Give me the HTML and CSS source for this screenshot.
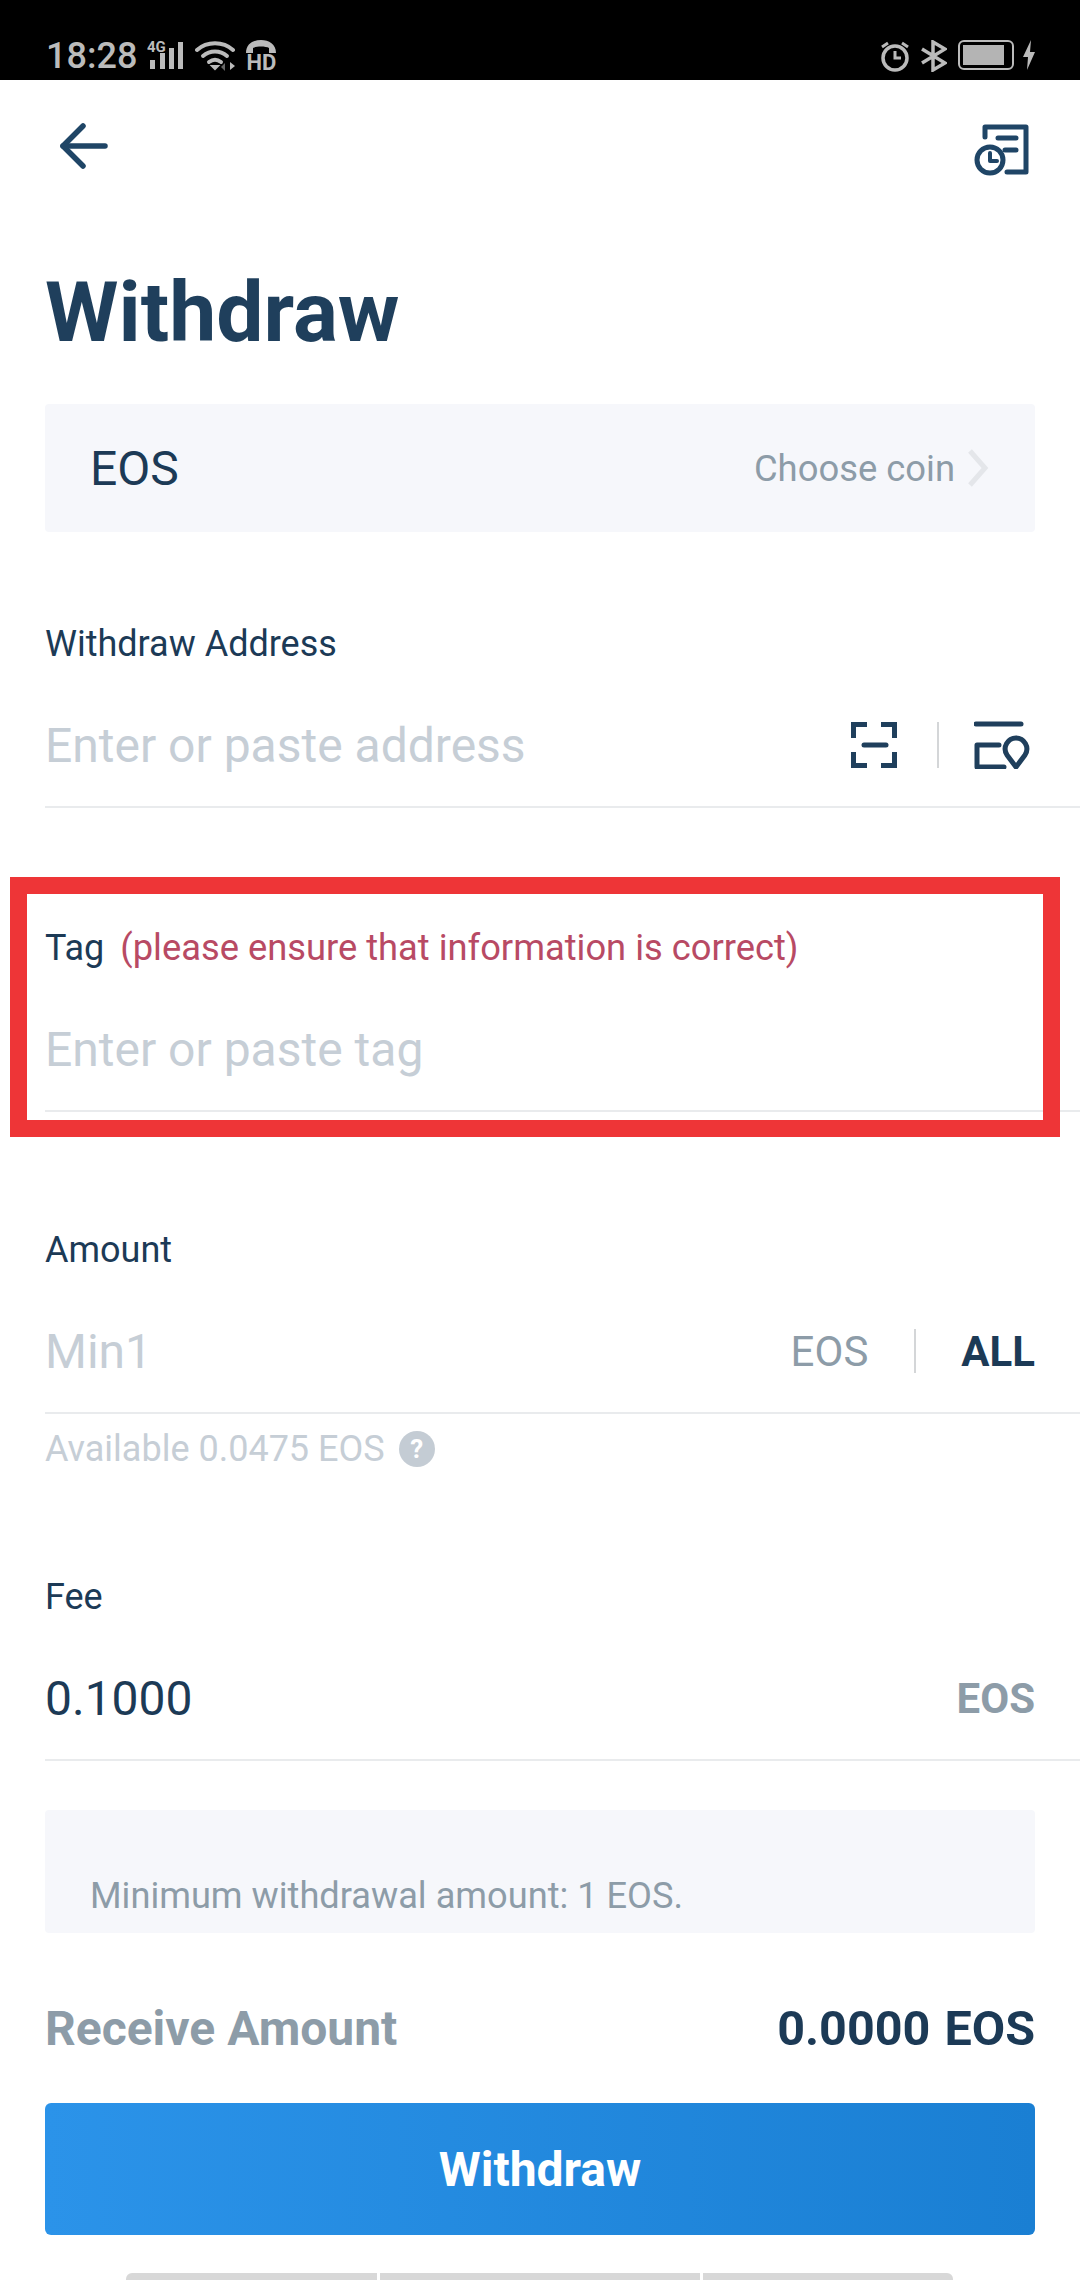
FILE: index.html
```html
<!DOCTYPE html>
<html lang="en">
<head>
<meta charset="UTF-8">
<meta name="viewport" content="width=device-width, initial-scale=1.0">
<title>Withdraw</title>
<link rel="stylesheet" href="styles.css">
</head>
<body>
<div class="phone">

    <!-- status bar -->
    <div class="status-bar">
        <div class="status-left">
            <span class="time">18:28</span>
            <svg class="icon-signal" width="38" height="36" viewBox="0 -6 38 36">
                <text x="0" y="12" class="net-type">4G</text>
                <rect x="3" y="20" width="5" height="9" fill="#bbb"/>
                <rect x="13" y="13" width="5" height="16" fill="#bbb"/>
                <rect x="22" y="8" width="5" height="21" fill="#bbb"/>
                <rect x="31" y="2" width="5" height="27" fill="#bbb"/>
            </svg>
            <svg class="icon-wifi" width="42" height="32" viewBox="0 0 42 32" fill="none" stroke="#bbb" stroke-width="4" stroke-linecap="round">
                <path d="M2 10C12 1 28 1 38 10"/>
                <path d="M8 16C15 10 25 10 32 16"/>
                <path d="M14 22C18 19 22 19 26 22"/>
                <path d="M17 26L20 29L23 26Z" fill="#bbb" stroke-width="2"/>
                <path d="M35 22V30L40 26Z" fill="#bbb" stroke="none"/>
                <path d="M30 23V31L26 27Z" fill="#666" stroke="none"/>
            </svg>
            <span class="hd-icon">
                <svg width="30" height="14" viewBox="0 0 30 14" fill="#bbb">
                    <path d="M0 13C0 4 7 0 15 0S30 4 30 13H23V8C20 6 10 6 7 8V13Z"/>
                </svg>
                <span class="hd-text">HD</span>
            </span>
        </div>
        <div class="status-right">
            <svg width="30" height="32" viewBox="0 0 30 32" fill="none" stroke="#bbb" stroke-width="3.5">
                <circle cx="15" cy="18" r="12"/>
                <path d="M15 11V18H21" stroke-width="3"/>
                <path d="M2 7L8 3M28 7L22 3" stroke-width="3"/>
            </svg>
            <svg width="26" height="32" viewBox="0 0 26 32" fill="none" stroke="#bbb" stroke-width="3.5">
                <path d="M1 9L24 23L12 30V2L24 9L1 23"/>
            </svg>
            <span class="battery"><span class="battery-fill"></span></span>
            <svg class="bolt" width="14" height="30" viewBox="0 0 14 30" fill="#bbb">
                <path d="M9 0L1 17H6L5 30L13 12H8Z"/>
            </svg>
        </div>
    </div>

    <div class="screen">
        <div class="top-bar">
            <svg width="48" height="46" viewBox="0 0 48 46" fill="none" stroke="#1f4566" stroke-width="5.5" stroke-linecap="round" stroke-linejoin="round">
                <path d="M23 3L3 23L23 43"/>
                <path d="M3 23H45"/>
            </svg>
            <svg width="56" height="54" viewBox="0 0 56 54" fill="none" stroke="#1f4566" stroke-width="5" stroke-linecap="round" stroke-linejoin="round">
                <path d="M11 14V4H52V49H33"/>
                <path d="M24 15H42M31 27H42"/>
                <circle cx="16" cy="37" r="13"/>
                <path d="M16 30V38H23" stroke-width="4"/>
            </svg>
        </div>

        <h1 class="title">Withdraw</h1>

        <div class="coin-box">
            <span class="coin-name">EOS</span>
            <span class="coin-choose">Choose coin
                <svg width="22" height="38" viewBox="0 0 22 38" fill="none" stroke="#e4e6ea" stroke-width="5">
                    <path d="M3 2L18 19L3 36"/>
                </svg>
            </span>
        </div>

        <div class="field field-address">
            <div class="field-label">Withdraw Address</div>
            <div class="field-row">
                <span class="placeholder">Enter or paste address</span>
                <div class="field-tools">
                    <svg width="46" height="46" viewBox="0 0 46 46" fill="none" stroke="#1f3f5c" stroke-width="5">
                        <path d="M16 2.500H2.500V16M30 2.500H43.500V16M16 43.500H2.500V30M30 43.500H43.500V30"/>
                        <path d="M13 23H35" stroke-linecap="round"/>
                    </svg>
                    <span class="tool-divider"></span>
                    <svg width="56" height="48" viewBox="0 0 56 48" fill="none" stroke="#1f3f5c" stroke-width="5" stroke-linecap="round" stroke-linejoin="round">
                        <path d="M2 3H47"/>
                        <path d="M25 24H3V46H30"/>
                        <path d="M43 46L34 34C29 26 35 17 43 17S57 26 52 34Z" transform="translate(-1 0)"/>
                    </svg>
                </div>
            </div>
        </div>

        <div class="field field-tag">
            <div class="field-label">Tag<span class="field-warning">(please ensure that information is correct)</span></div>
            <div class="field-row">
                <span class="placeholder">Enter or paste tag</span>
            </div>
            <!-- red mark over the screenshot -->
            <div class="highlight"></div>
        </div>

        <div class="field field-amount">
            <div class="field-label">Amount</div>
            <div class="field-row">
                <span class="placeholder">Min1</span>
                <div class="amount-tools">
                    <span class="amount-unit">EOS</span>
                    <span class="amount-divider"></span>
                    <span class="amount-all">ALL</span>
                </div>
            </div>
        </div>
        <div class="available">Available 0.0475 EOS <span class="help">?</span></div>

        <div class="field field-fee">
            <div class="field-label">Fee</div>
            <div class="field-row">
                <span class="fee-value">0.1000</span>
                <span class="fee-unit">EOS</span>
            </div>
        </div>

        <div class="info-box">Minimum withdrawal amount: 1 EOS.</div>

        <div class="receive-row">
            <span class="receive-label">Receive Amount</span>
            <span class="receive-value">0.0000 EOS</span>
        </div>

        <button class="submit">Withdraw</button>

        <div class="peek-bars">
            <span class="peek peek-a"></span>
            <span class="peek peek-b"></span>
            <span class="peek peek-c"></span>
        </div>
    </div>
</div>
</body>
</html>
```

FILE: styles.css
```css
* {
box-sizing: border-box;
}
body {
margin: 0;
padding: 0;
background-color: white;
font-family: Roboto, "Liberation Sans", sans-serif;
color: #1c3a56;
}
.phone {
width: 1080px;
height: 2280px;
overflow: hidden;
}
.status-bar {
height: 80px;
background-color: black;
display: flex;
justify-content: space-between;
align-items: flex-start;
padding: 40px 44px 0 46px;
color: #bbb;
}
.status-left {
display: flex;
align-items: flex-start;
}
.time {
font-size: 36px;
font-weight: 500;
line-height: 32px;
margin-right: 10px;
}
.icon-signal {
margin-top: -6px;
margin-right: 10px;
}
.net-type {
font-size: 15px;
font-weight: 700;
fill: #bbb;
}
.icon-wifi {
margin-right: 9px;
}
.hd-icon {
display: flex;
flex-direction: column;
align-items: center;
}
.hd-text {
font-size: 22px;
font-weight: 700;
line-height: 18px;
}
.status-right {
display: flex;
align-items: flex-start;
gap: 11px;
}
.battery {
width: 56px;
height: 30px;
border: 2px solid #bbb;
border-radius: 6px;
padding: 3px;
margin-right: -3px;
}
.battery-fill {
display: block;
width: 41px;
height: 20px;
background-color: #b4b4b4;
}
.screen {
padding-left: 45px;
}
.top-bar {
height: 132px;
display: flex;
justify-content: space-between;
align-items: flex-start;
padding: 43px 50px 0 15px;
}
.title {
margin: 59px 0 49px 0;
font-size: 84px;
line-height: 84px;
font-weight: 700;
color: #1f3f5c;
}
.coin-box {
width: 990px;
height: 128px;
border-radius: 4px;
background-color: #f6f7fb;
display: flex;
justify-content: space-between;
align-items: center;
padding: 0 45px;
}
.coin-name {
font-size: 48px;
}
.coin-choose {
display: flex;
align-items: center;
gap: 12px;
font-size: 36.400px;
color: #8d9ca8;
margin-right: 1px;
}
.field {
border-bottom: 2px solid #e9ebed;
height: 185px;
}
.field-address {
margin-top: 91px;
}
.field-tag {
position: relative;
margin-top: 119px;
}
.field-amount {
margin-top: 117px;
}
.field-fee {
margin-top: 109px;
}
.field-label {
height: 40px;
font-size: 36px;
line-height: 42px;
}
.field-warning {
font-size: 36.300px;
color: #b84a64;
margin-left: 16px;
}
.field-row {
height: 84px;
margin-top: 40px;
padding-right: 45px;
display: flex;
justify-content: space-between;
align-items: center;
}
.placeholder {
font-size: 48px;
color: #c6ced6;
}
.field-tools {
display: flex;
align-items: center;
margin-right: 5px;
}
.tool-divider {
width: 2px;
height: 46px;
background-color: #d4d6d8;
margin: 0 35px 0 40px;
}
.highlight {
position: absolute;
left: -35px;
top: -50px;
width: 1050px;
height: 260px;
border: 17px solid #ee3537;
}
.amount-tools {
display: flex;
align-items: center;
}
.amount-unit {
font-size: 42px;
color: #8d9ca8;
}
.amount-divider {
width: 2px;
height: 44px;
background-color: #d4d6d8;
margin: 0 45px 0 46px;
}
.amount-all {
font-size: 42px;
font-weight: 700;
}
.available {
height: 36px;
margin-top: 17px;
font-size: 36px;
line-height: 36px;
color: #c6ced6;
display: flex;
align-items: center;
gap: 14px;
}
.help {
width: 36px;
height: 36px;
border-radius: 50%;
background-color: #c4ccd4;
color: white;
font-size: 26px;
font-weight: 700;
text-align: center;
}
.fee-value {
font-size: 48px;
}
.fee-unit {
font-size: 42px;
font-weight: 700;
color: #8d9ca8;
}
.info-box {
width: 990px;
height: 123px;
margin-top: 49px;
padding: 66px 45px 0 45px;
border-radius: 4px;
background-color: #f6f7fb;
font-size: 36.200px;
line-height: 40px;
color: #8d9ca8;
}
.receive-row {
width: 990px;
height: 60px;
margin-top: 65px;
display: flex;
justify-content: space-between;
align-items: center;
font-size: 48px;
font-weight: 700;
}
.receive-label {
color: #8d9ca8;
}
.receive-value {
font-size: 48.500px;
word-spacing: 2px;
}
.submit {
display: block;
width: 990px;
height: 132px;
margin-top: 45px;
border: none;
border-radius: 6px;
background: linear-gradient(90deg, #2b93e9, #1a7fd3);
color: white;
font-family: inherit;
font-size: 48px;
font-weight: 700;
}
.peek-bars {
display: flex;
gap: 3px;
margin: 38px 0 0 81px;
}
.peek {
height: 7px;
background-color: #d8d8d8;
}
.peek-a {
width: 251px;
border-radius: 6px 0 0 0;
}
.peek-b {
width: 320px;
}
.peek-c {
width: 250px;
border-radius: 0 6px 0 0;
}
```
